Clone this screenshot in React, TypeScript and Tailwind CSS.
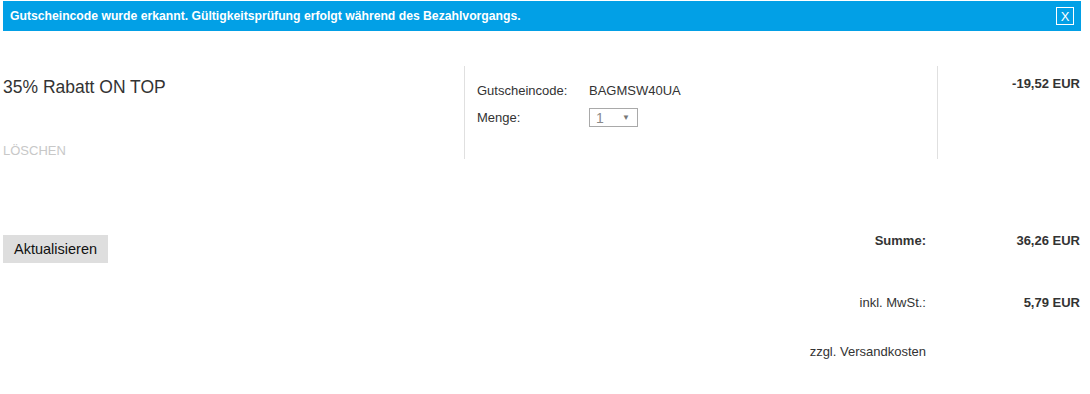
import React from 'react';

const totals = [
  { label: 'Summe:', value: '36,26 EUR', bold: true },
  { label: 'inkl. MwSt.:', value: '5,79 EUR', bold: false },
];

export default function App() {
  return (
    <div className="w-[1090px] h-[394px] bg-white pl-[3px] pr-[9px] text-[13px] leading-4 text-[#333] font-['Liberation_Sans',Arial,sans-serif]">
      {/* Info banner */}
      <div className="mt-px h-[30px] bg-[#02a0e6] flex items-center justify-between pl-[7px] pr-[7px]">
        <span className="text-white font-bold text-[12.2px]">
          Gutscheincode wurde erkannt. Gültigkeitsprüfung erfolgt während des Bezahlvorgangs.
        </span>
        <button className="w-[18px] h-[18px] border border-white text-white text-[13px] leading-none flex items-center justify-center">
          X
        </button>
      </div>

      {/* Voucher row */}
      <div className="mt-[35px] h-[93px] flex">
        <div className="w-[461px] flex flex-col">
          <div className="pt-[11px] text-[17.5px] leading-5 text-[#333]">35% Rabatt ON TOP</div>
          <a href="#" className="mt-[46px] text-[13px] leading-4 text-[#c8c8c8] uppercase">Löschen</a>
        </div>
        <div className="w-[474px] border-l border-r border-[#e0e0e0] pl-3 pt-[17px]">
          <div className="flex">
            <span className="w-[112px]">Gutscheincode:</span>
            <span>BAGMSW40UA</span>
          </div>
          <div className="flex items-center mt-[9px]">
            <span className="w-[112px] pt-px">Menge:</span>
            <div className="w-[49px] h-[19px] border border-[#a9a9a9] flex items-center justify-between pl-[6px] pr-[7px]">
              <span className="text-[#8a8a8a] text-[14px]">1</span>
              <span className="text-[#777] text-[8px]">▼</span>
            </div>
          </div>
        </div>
        <div className="flex-1 text-right pr-px pt-[10px] font-bold">-19,52 EUR</div>
      </div>

      {/* Totals */}
      <div className="mt-[74px] flex items-start">
        <button className="mt-[2px] h-[28px] px-[11px] bg-[#dedede] text-[14.5px] text-[#111]">Aktualisieren</button>
        <div className="flex-1 flex flex-col">
          {totals.map((t, i) => (
            <div key={t.label} className={`flex ${i > 0 ? 'mt-[46px]' : ''}`}>
              <span className={`flex-1 text-right ${t.bold ? 'font-bold' : ''}`}>{t.label}</span>
              <span className="w-[155px] text-right pr-px font-bold">{t.value}</span>
            </div>
          ))}
          <div className="flex mt-[33px]">
            <span className="flex-1 text-right">zzgl. Versandkosten</span>
            <span className="w-[155px]"></span>
          </div>
        </div>
      </div>
    </div>
  );
}
